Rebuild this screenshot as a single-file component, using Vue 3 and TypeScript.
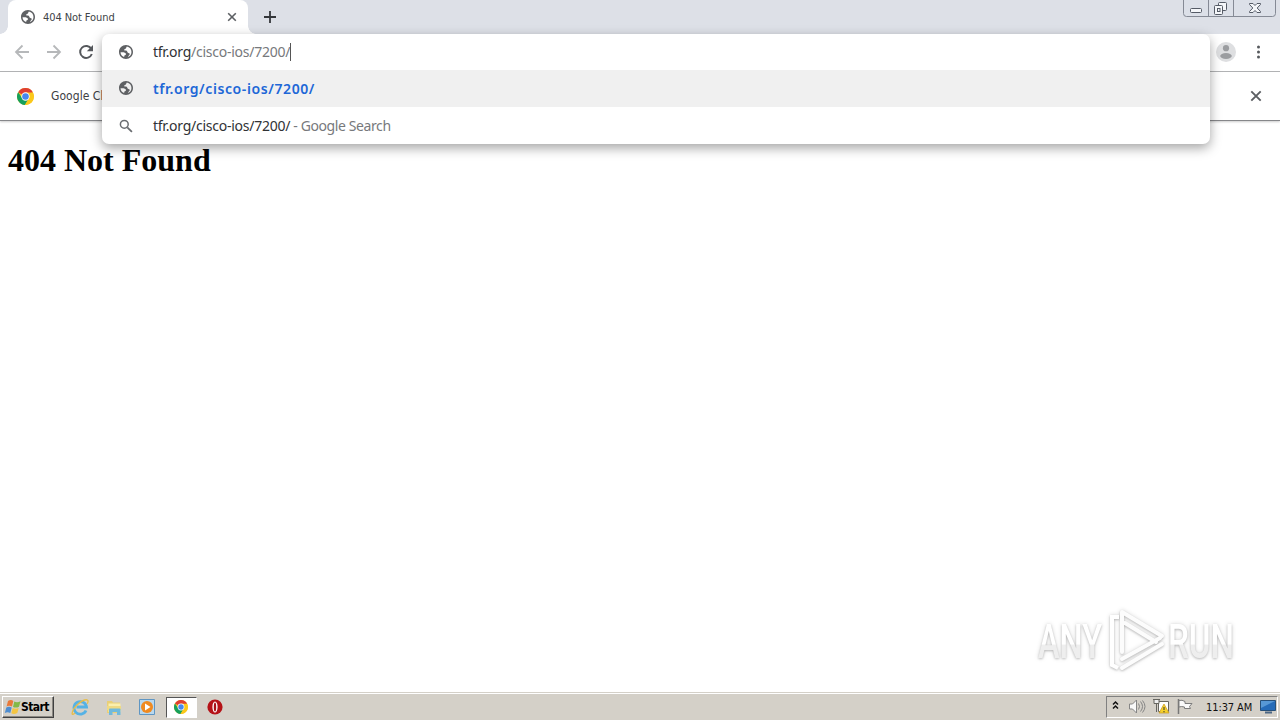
<script setup lang="ts">
interface Suggestion {
  kind: 'globe' | 'search'
  text: string
  note?: string
  selected?: boolean
}

const suggestions: Suggestion[] = [
  { kind: 'globe', text: 'tfr.org/cisco-ios/7200/', selected: true },
  { kind: 'search', text: 'tfr.org/cisco-ios/7200/', note: ' - Google Search' },
]

const globePath =
  'M12 2C6.48 2 2 6.48 2 12s4.48 10 10 10 10-4.48 10-10S17.52 2 12 2zM4.2 12.5c4-.6 7.500.4 7.800 2.300.2 1.500-1.500 1.400-2.200 2.300-.5.800-.1 1.700-.5 2.200C6.300 18.200 4.200 15.600 4.200 12.500zM19.800 12c0 3.300-2 6.200-5 7.300 0-2 2.700-2.300 2.600-4.300-.1-1.600-1.800-1.300-3-2.400-.9-.9-.4-2.100-1.500-2.500-1.300-.5-3.200.3-3.500-1-.2-1.200 1.700-1.100 2.500-2 .8-.8.2-2 1.400-2.900 3.800.6 6.500 3.800 6.500 7.800z'
</script>

<template>
  <div class="desktop">
    <svg class="defs" width="0" height="0">
      <defs>
        <symbol id="globe" viewBox="2 2 20 20"><path :d="globePath" fill="#5f6164" /></symbol>
        <symbol id="chrome" viewBox="0 0 16 16">
          <circle cx="8" cy="8" r="8" fill="#fbc81b" />
          <path d="M8 8 L1.070 4 A8 8 0 0 1 14.930 4 Z" fill="#df3f32" />
          <path d="M1.070 4 A8 8 0 0 0 7.500 16 L11 9.700 L5 9.700 Z" fill="#16a05c" />
          <path d="M7.500 16 A8 8 0 0 0 14.930 4.300 L8 4.300 L11.400 9.700 Z" fill="#fbc81b" />
          <circle cx="8" cy="8" r="3.900" fill="#fff" />
          <circle cx="8" cy="8" r="3.100" fill="#4688ee" />
        </symbol>
      </defs>
    </svg>

    <header class="tabstrip">
      <div class="tab">
        <svg class="tab-icon" width="14" height="14"><use href="#globe" /></svg>
        <span class="tab-title">404 Not Found</span>
        <svg class="tab-close" width="10" height="10" viewBox="0 0 10 10"><path d="M1.200 1.200 8.800 8.800M8.800 1.200 1.200 8.800" stroke="#5c5f63" stroke-width="1.600" /></svg>
      </div>
      <svg class="new-tab" width="14" height="14" viewBox="0 0 14 14"><path d="M7 1v12M1 7h12" stroke="#34373b" stroke-width="1.800" /></svg>
      <svg class="window-buttons" width="94" height="18" viewBox="0 0 94 18">
        <path d="M.5 0V13.500Q.5 16.500 3.500 16.500H89.500Q92.500 16.500 92.500 13.500V0" fill="#dce0e8" stroke="#858a95" />
        <path d="M25.500 0V16M50.500 0V16" stroke="#858a95" />
        <g fill="#f4f6f9" stroke="#555b66">
          <rect x="7.500" y="8.500" width="11" height="4" rx="1" />
          <rect x="35.500" y="2.500" width="8" height="8" rx="1" />
          <rect x="31.500" y="5.500" width="8" height="9" rx="1" />
          <rect x="34.500" y="8.500" width="2.500" height="3" />
          <path d="M66.500 3.500h3.500l2 2 2-2h3.500v1l-3.300 3.500 3.300 3.500v1H74l-2-2-2 2h-3.500v-1l3.300-3.500-3.300-3.500z" />
        </g>
      </svg>
    </header>

    <div class="toolbar">
      <svg width="96" height="36" viewBox="0 0 96 36" fill="none" stroke-width="1.800">
        <path d="M29 18H16M22.500 11.500 16 18l6.500 6.500" stroke="#b6b8ba" />
        <path d="M47 18h13M53.500 11.500 60 18l-6.500 6.500" stroke="#b6b8ba" />
        <path d="M91.300 14.800A6 6 0 1 0 91.800 20" stroke="#55585c" stroke-width="2" />
        <path d="M93 11v6.200h-6.200z" fill="#55585c" />
      </svg>
      <div class="toolbar-right">
        <svg width="20" height="20" viewBox="0 0 20 20">
          <circle cx="10" cy="10" r="10" fill="#dedfe1" />
          <circle cx="10" cy="6.200" r="3.100" fill="#9b9da0" />
          <ellipse cx="10" cy="14" rx="5.800" ry="2.900" fill="#9b9da0" />
        </svg>
        <svg class="menu-dots" width="4" height="16" viewBox="0 0 4 16" fill="#56595d">
          <circle cx="1.500" cy="3" r="1.500" /><circle cx="1.500" cy="8" r="1.500" /><circle cx="1.500" cy="13" r="1.500" />
        </svg>
      </div>
    </div>

    <div class="infobar">
      <svg width="17" height="17"><use href="#chrome" /></svg>
      <span class="info-text">Google Chrome</span>
      <svg class="info-close" width="12" height="12" viewBox="0 0 12 12"><path d="M1.300 1.300 10.700 10.700M10.700 1.300 1.300 10.700" stroke="#5c5f63" stroke-width="1.900" /></svg>
    </div>

    <section class="omnibox">
      <div class="row input-row">
        <svg class="row-icon" width="14" height="14"><use href="#globe" /></svg>
        <span class="url">tfr.org<span class="dim">/cisco-ios/7200/</span></span><i class="caret"></i>
      </div>
      <div v-for="s in suggestions" :key="s.kind" class="row" :class="{ selected: s.selected }">
        <svg v-if="s.kind === 'globe'" class="row-icon" width="14" height="14"><use href="#globe" /></svg>
        <svg v-else class="row-icon" width="14" height="14" viewBox="0 0 14 14" fill="none" stroke="#6a6d71">
          <circle cx="5.300" cy="5.300" r="3.900" stroke-width="1.500" /><path d="m8.300 8.300 4.600 4.600" stroke-width="1.800" />
        </svg>
        <span class="url">{{ s.text }}</span><span v-if="s.note" class="note">{{ s.note }}</span>
      </div>
    </section>

    <main class="page">
      <h1>404 Not Found</h1>
      <svg class="watermark" width="220" height="76" viewBox="0 0 220 76">
        <defs>
          <linearGradient id="fade" x1="0" y1="0" x2="0" y2="1">
            <stop offset=".54" stop-color="#fff" /><stop offset=".57" stop-color="#eeeeee" />
          </linearGradient>
        </defs>
        <g class="mark">
          <text x="8" y="55" textLength="64" lengthAdjust="spacingAndGlyphs" fill="url(#fade)">ANY</text>
          <text x="138" y="55" textLength="66" lengthAdjust="spacingAndGlyphs" fill="url(#fade)">RUN</text>
          <path d="M89 14H82V62L88 65" fill="none" stroke="#fff" stroke-width="4" />
          <path d="M92 49V9L132 33 M92 20V49 M95 20 126 39 M92 56 130 35 M92 65 132 41" fill="none" stroke="#fcfcfc" stroke-width="4" stroke-linecap="round" stroke-linejoin="round" />
        </g>
      </svg>
    </main>

    <footer class="taskbar">
      <button class="start">
        <svg width="18" height="16" viewBox="0 0 18 16">
          <path d="M4 2Q7 0 9.300 2L8 7.500Q5 6 2.600 7.500Z" fill="#e97939" />
          <path d="M10.300 2.500Q13 4 16.500 2.300L15 7.700Q12 9.300 9 7.900Z" fill="#83b947" />
          <path d="M2.300 8.500Q5 7 7.700 8.500L6.300 14Q3.500 12.300.8 14Z" fill="#4e8dd0" />
          <path d="M8.700 9Q11.700 10.500 14.700 9L13.300 14Q10 16 7.300 14.300Z" fill="#f4c542" />
        </svg>
        <span>Start</span>
      </button>
      <div class="quick">
        <svg width="18" height="18" viewBox="0 0 18 18" fill="none">
          <path d="M15 12.500A6.300 6.300 0 1 1 15.500 9H5.500" stroke="#55b2e5" stroke-width="2.800" />
          <path d="M4 15Q.5 18 1.300 14.500C2.500 9 11.500 1 16 1.800q2 .7.300 4" stroke="#e8bd49" stroke-width="1.300" />
        </svg>
        <svg width="18" height="18" viewBox="0 0 18 18">
          <path d="M2 3h5l1 1.500h7V15H2z" fill="#e9cf76" /><path d="M3.500 5.500h12V14h-12z" fill="#fbefad" />
          <path d="M2 8h14v4H2z" fill="#efda83" /><path d="M4 17v-5.500q0-1 1-1h9.500q1 0 1 1V17H12v-3H7.500v3z" fill="#70b9dc" />
        </svg>
        <svg width="18" height="18" viewBox="0 0 18 18">
          <path d="M1.500 1.500h15v15h-15z" fill="#b9d8ee" stroke="#5f96c3" />
          <circle cx="9" cy="9" r="6" fill="#f08a20" /><path d="M7 5.500v7L12.500 9z" fill="#fff" />
        </svg>
        <div class="active-task"><svg width="14" height="14"><use href="#chrome" /></svg></div>
        <svg width="18" height="18" viewBox="0 0 18 18">
          <circle cx="9" cy="9" r="7.600" fill="#b51217" /><ellipse cx="9" cy="9" rx="2.600" ry="5.500" fill="#fff" /><ellipse cx="9" cy="9" rx="1.200" ry="4.500" fill="#a91015" />
        </svg>
      </div>
      <div class="tray">
        <svg width="90" height="20" viewBox="0 0 90 20" fill="none">
          <path d="M6 7.500 8.500 5 11 7.500M6 11.500 8.500 9l2.500 2.500" stroke="#111" stroke-width="1.500" />
          <g stroke="#858585">
            <path d="M22.500 7h3l4-4v13l-4-4h-3z" fill="#f8f8f8" />
            <path d="M31.500 6.500q2 3 0 6M33.500 4.500q4 5 0 10M35.500 3.500q5 6 0 12" />
          </g>
          <path d="M51.500 4.500h10v10h-10z" fill="#fff" stroke="#66655f" />
          <path d="M47 2v4.500h5V2M49.500 6.500V15M46 2.500h7" fill="#eee" stroke="#66655f" />
          <path d="m57 7 5 9H52z" fill="#f6d22b" stroke="#c7971c" stroke-width=".7" /><path d="M57 10v3M57 14v1.300" stroke="#333" />
          <path d="M71.500 2v15" stroke="#777" stroke-width="1.500" />
          <path d="M72 3.500q3-1 6 1v2h7l-2.500 3 1 2h-6v-1.500q-3-1-5.500 0z" fill="#fafafa" stroke="#7c7c7c" />
        </svg>
        <span class="clock">11:37 AM</span>
        <svg class="screen" width="16" height="14" viewBox="0 0 16 14"><path d="M.5.5h15v10H.5z" fill="#256bb8" stroke="#275079" /><path d="M1 1h14L1 8z" fill="#5798d5" /><path d="M5 12.500h7" stroke="#4c6784" stroke-width="2" /></svg>
      </div>
    </footer>
  </div>
</template>

<style>
body { margin: 0; overflow: hidden; }
</style>
<style scoped>
.desktop { position: relative; width: 1280px; height: 720px; display: flex; flex-direction: column; overflow: hidden; background: #fff; font-family: "DejaVu Sans Condensed", "DejaVu Sans", sans-serif; }
.defs { position: absolute; }
svg { display: block; flex-shrink: 0; }
.tabstrip { height: 34px; flex: none; display: flex; background: #dde0e7; padding-left: 8px; }
.tab { position: relative; width: 240px; height: 34px; box-sizing: border-box; display: flex; align-items: center; background: #fff; border-radius: 8px 8px 0 0; padding-left: 13px; }
.tab::before, .tab::after { content: ""; position: absolute; bottom: 0; width: 8px; height: 8px; }
.tab::before { left: -8px; background: radial-gradient(circle at 0 0, transparent 7.500px, #fff 8px); }
.tab::after { right: -8px; background: radial-gradient(circle at 100% 0, transparent 7.500px, #fff 8px); }
.tab-title { margin-left: 8px; font-size: 11px; color: #404347; letter-spacing: -.08px; white-space: nowrap; }
.tab-close { margin-left: auto; margin-right: 11px; }
.new-tab { margin: 10px 0 0 15px; }
.window-buttons { margin-left: auto; margin-right: 3px; }
.toolbar { height: 37px; flex: none; display: flex; justify-content: space-between; border-bottom: 1px solid #b4b5b7; background: #fff; }
.toolbar-right { display: flex; align-items: center; padding: 0 19px 1px 0; gap: 21px; }
.infobar { height: 48px; flex: none; display: flex; align-items: center; border-bottom: 1px solid #86878a; box-shadow: 0 1px 2px #0003; padding: 0 18px 0 17px; }
.info-text { margin-left: 17px; font-size: 12px; color: #3d4044; letter-spacing: .05px; white-space: nowrap; }
.info-close { margin-left: auto; }
.omnibox { position: absolute; z-index: 2; left: 102px; top: 34px; width: 1108px; height: 110px; background: #fff; border-radius: 7px; box-shadow: 0 4px 12px #0000005c; overflow: hidden; display: flex; flex-direction: column; }
.row { height: 37px; box-sizing: border-box; display: flex; align-items: center; padding-left: 17px; font-family: "Noto Sans", sans-serif; font-size: 14px; letter-spacing: -.26px; color: #303235; white-space: pre; }
.row-icon { margin-right: 20px; }
.input-row { height: 36px; padding-bottom: 1px; }
.dim, .note { color: #77797c; }
.note { letter-spacing: -.4px; }
.selected { background: #f0f0f0; color: #2067d7; font-weight: 600; letter-spacing: .6px; padding-bottom: 1px; }
.caret { width: 1px; height: 18px; background: #555; }
.page { flex: 1; display: flex; flex-direction: column; justify-content: space-between; padding: 21px 30px 13px 8px; }
h1 { margin: 0; font: bold 32px/36px "Liberation Serif", "Times New Roman", serif; color: #000; }
.watermark { align-self: flex-end; }
.mark { filter: drop-shadow(0 1px 1px #00000033) drop-shadow(0 0 2px #00000026); }
.watermark text { font: 500 49px Roboto, sans-serif; }
.taskbar { height: 28px; flex: none; box-sizing: border-box; border-top: 1px solid #d4d0c8; box-shadow: inset 0 1px #fff; background: #d4d0c8; display: flex; align-items: center; padding: 1px 2px 0; }
.start { width: 52px; height: 22px; box-sizing: border-box; margin: 0; padding: 0 0 0 1px; display: flex; align-items: center; border: 1px solid; border-color: #fff #404040 #404040 #fff; box-shadow: inset -1px -1px #8b8882; background: #d4d0c8; color: #000; font: bold 12px "DejaVu Sans Condensed", sans-serif; }
.start span { letter-spacing: -.6px; margin-left: -1px; }
.quick { display: flex; align-items: center; margin-left: 17px; gap: 15.5px; }
.active-task { width: 31px; height: 21px; box-sizing: border-box; display: flex; align-items: center; justify-content: center; border: 1px solid; border-color: #555 #fff #fff #555; background: #fff; margin: 0 -6px; }
.tray { width: 172px; height: 22px; box-sizing: border-box; margin-left: auto; display: flex; align-items: center; border: 1px solid; border-color: #808080 #fff #fff #808080; }
.clock { width: 47px; margin-left: 9px; font-size: 11px; color: #111; letter-spacing: -.1px; white-space: nowrap; }
.screen { margin-left: 7px; }
</style>
